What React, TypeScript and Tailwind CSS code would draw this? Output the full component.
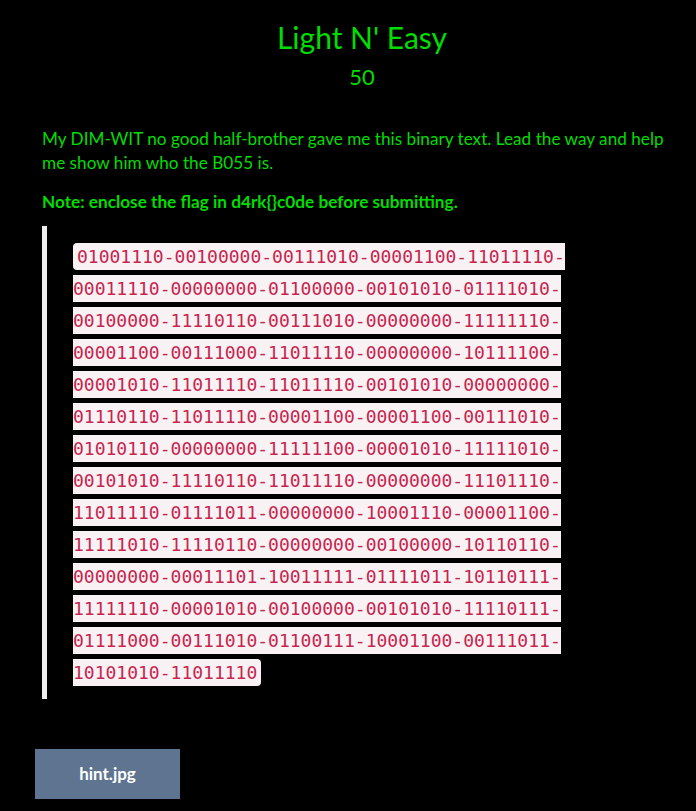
import { Fragment } from "react";

const binary = [
  "01001110-00100000-00111010-00001100-11011110-",
  "00011110-00000000-01100000-00101010-01111010-",
  "00100000-11110110-00111010-00000000-11111110-",
  "00001100-00111000-11011110-00000000-10111100-",
  "00001010-11011110-11011110-00101010-00000000-",
  "01110110-11011110-00001100-00001100-00111010-",
  "01010110-00000000-11111100-00001010-11111010-",
  "00101010-11110110-11011110-00000000-11101110-",
  "11011110-01111011-00000000-10001110-00001100-",
  "11111010-11110110-00000000-00100000-10110110-",
  "00000000-00011101-10011111-01111011-10110111-",
  "11111110-00001010-00100000-00101010-11110111-",
  "01111000-00111010-01100111-10001100-00111011-",
  "10101010-11011110",
].join("");

// break only after each hyphen, like the original
const chunks = binary.split("-");

export default function App() {
  return (
    <div className="min-h-[811px] w-full bg-black font-['Lato',sans-serif] text-[#00dd00]">
      <div className="flex flex-col items-center pt-[16px] pl-[28px]">
        <h1 className="text-[30px] leading-[42px]">Light N' Easy</h1>
        <p className="mt-[1px] text-[22px] leading-[36px]">50</p>
      </div>

      <div className="mt-[32px] pl-[42px] pr-[24px]">
        <p className="text-[17.2px] leading-[24px]">
          My DIM-WIT no good half-brother gave me this binary text. Lead the way and help me show him who the B055 is.
        </p>
        <p className="mt-[15px] text-[17.2px] font-bold leading-[24px]">
          Note: enclose the flag in d4rk{"{}"}c0de before submitting.
        </p>

        <blockquote className="mt-[12px] w-[530px] border-l-[5px] border-[#eeeeee] pt-[15px] pb-[10px] pl-[26px]">
          <code className="box-decoration-slice rounded-[4px] bg-[#f9f2f4] px-[4px] py-[3px] font-['DejaVu_Sans_Mono',monospace] text-[18px] leading-[32px] text-[#c7254e]">
            {chunks.map((c, i) => (
              <Fragment key={i}>
                {c}
                {i < chunks.length - 1 && (
                  <>
                    -<wbr />
                  </>
                )}
              </Fragment>
            ))}
          </code>
        </blockquote>
      </div>

      <div className="mt-[50px] pl-[35px] pb-[12px]">
        <button className="h-[50px] w-[145px] bg-[#5f7491] text-[17px] font-bold text-white">
          hint.jpg
        </button>
      </div>
    </div>
  );
}
